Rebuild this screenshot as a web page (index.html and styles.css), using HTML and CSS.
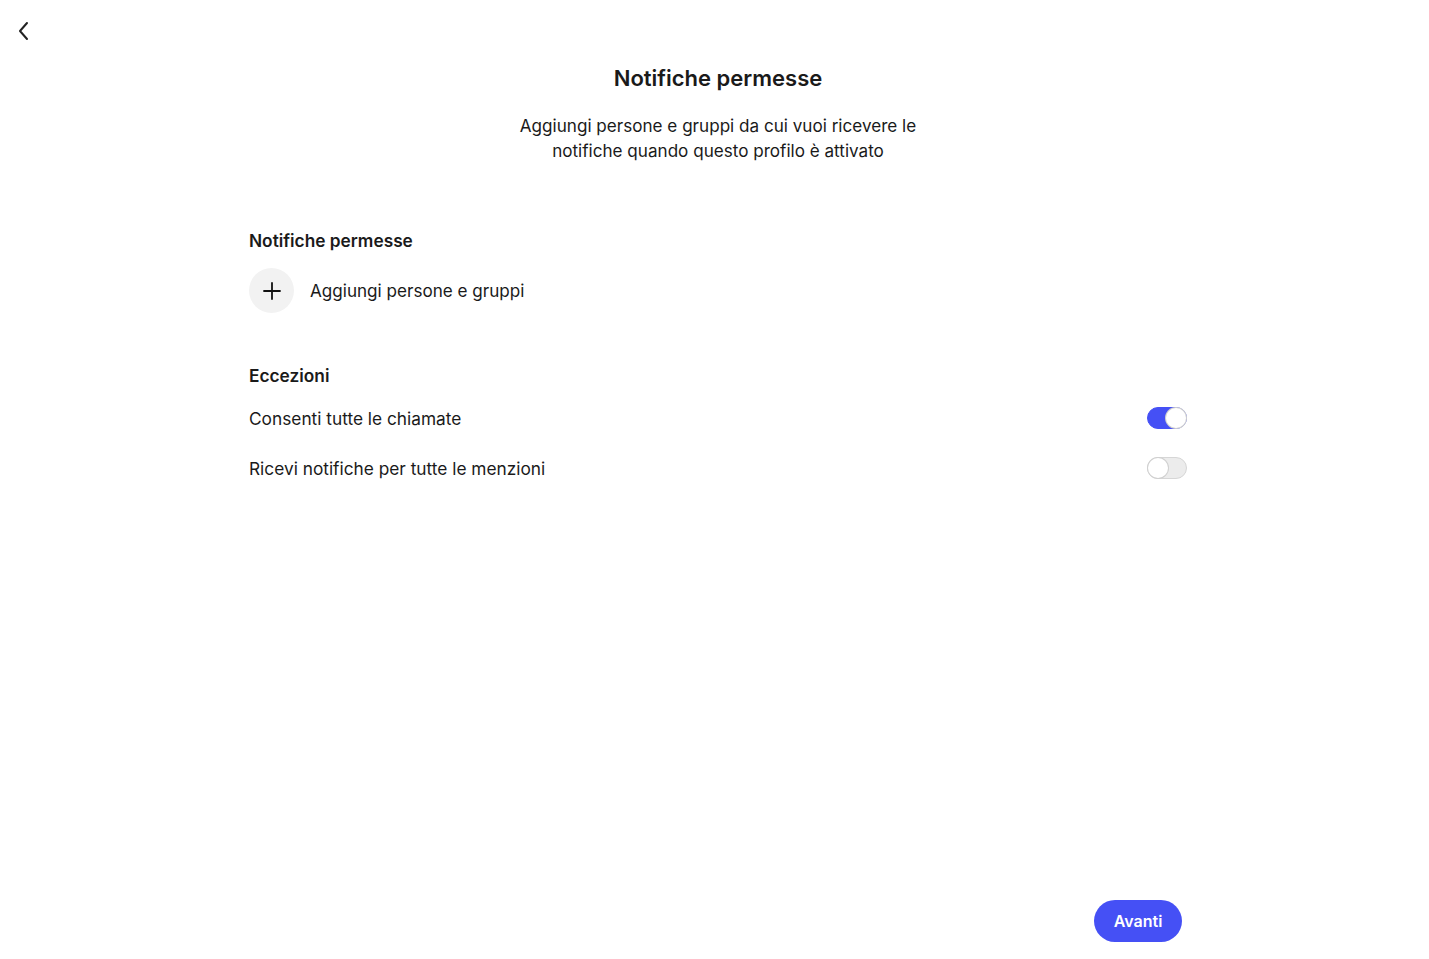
FILE: index.html
```html
<!DOCTYPE html>
<html lang="it">
<head>
<meta charset="UTF-8">
<title>Notifiche permesse</title>
<link rel="stylesheet" href="styles.css">
</head>
<body>
<div class="page">
    <button class="back" type="button" aria-label="Indietro">
        <svg width="14" height="20" viewBox="0 0 14 20"><path d="M10 2 L3 10 L10 18" fill="none" stroke="#222" stroke-width="2" stroke-linecap="round" stroke-linejoin="round"/></svg>
    </button>
    <div class="content">
        <h1 class="title">Notifiche permesse</h1>
        <p class="subtitle">Aggiungi persone e gruppi da cui vuoi ricevere le<br>notifiche quando questo profilo è attivato</p>

        <h2 class="section-title first">Notifiche permesse</h2>
        <div class="add-row">
            <span class="add-circle">
                <svg width="20" height="20" viewBox="0 0 20 20"><path d="M10 2 V18 M2 10 H18" stroke="#111" stroke-width="1.8" stroke-linecap="round"/></svg>
            </span>
            <span class="add-label">Aggiungi persone e gruppi</span>
        </div>

        <h2 class="section-title">Eccezioni</h2>
        <div class="toggle-row">
            <span>Consenti tutte le chiamate</span>
            <span class="toggle on"><span class="knob"></span></span>
        </div>
        <div class="toggle-row">
            <span>Ricevi notifiche per tutte le menzioni</span>
            <span class="toggle"><span class="knob"></span></span>
        </div>
    </div>
    <div class="footer">
        <button class="next" type="button">Avanti</button>
    </div>
</div>
</body>
</html>
```

FILE: styles.css
```css
html, body {
    margin: 0;
    padding: 0;
    background: #fff;
    font-family: Inter, "Noto Sans", sans-serif;
    color: #1a1a1a;
}
.page {
    width: 1429px;
    height: 959px;
    display: flex;
    flex-direction: column;
    position: relative;
}
.back {
    position: absolute;
    left: 17px;
    top: 21px;
    background: none;
    border: none;
    padding: 0;
    cursor: pointer;
}
.content {
    width: 938px;
    margin-left: 249px;
    display: flex;
    flex-direction: column;
}
.title {
    margin: 63px 0 0;
    text-align: center;
    font-size: 22px;
    font-weight: 600;
    line-height: 30px;
}
.subtitle {
    margin: 20px 0 0;
    text-align: center;
    font-size: 17.1px;
    line-height: 25px;
}
.section-title {
    margin: 0;
    font-size: 17.3px;
    font-weight: 600;
    line-height: 24px;
    margin-top: 51px;
}
.section-title.first {
    margin-top: 66px;
}
.add-row {
    display: flex;
    align-items: center;
    gap: 16px;
    margin-top: 15px;
    font-size: 17.3px;
}
.add-label {
    font-size: 17.1px;
}
.add-circle {
    width: 45px;
    height: 45px;
    border-radius: 50%;
    background: #f2f2f2;
    display: flex;
    align-items: center;
    justify-content: center;
}
.toggle-row {
    display: flex;
    justify-content: space-between;
    align-items: center;
    font-size: 17.3px;
    height: 50px;
}
.section-title + .toggle-row {
    margin-top: 5px;
}
.toggle {
    width: 40px;
    height: 22px;
    box-sizing: border-box;
    border-radius: 11px;
    background: #ececec;
    border: 1px solid #d6d6d6;
    position: relative;
}
.toggle .knob {
    position: absolute;
    top: 0;
    left: 0;
    width: 20px;
    height: 20px;
    border-radius: 50%;
    background: #fff;
    box-shadow: 0 0 0 1px #d0d0d0;
}
.toggle.on {
    background: #4550f5;
    border-color: #4550f5;
}
.toggle.on .knob {
    left: 18px;
}
.footer {
    margin-top: auto;
    display: flex;
    justify-content: flex-end;
    padding: 0 247px 17px 0;
}
.next {
    width: 88px;
    height: 42px;
    border: none;
    border-radius: 21px;
    background: #4550f5;
    color: #fff;
    font-family: Inter, sans-serif;
    font-size: 16px;
    font-weight: 600;
    cursor: pointer;
}
```
